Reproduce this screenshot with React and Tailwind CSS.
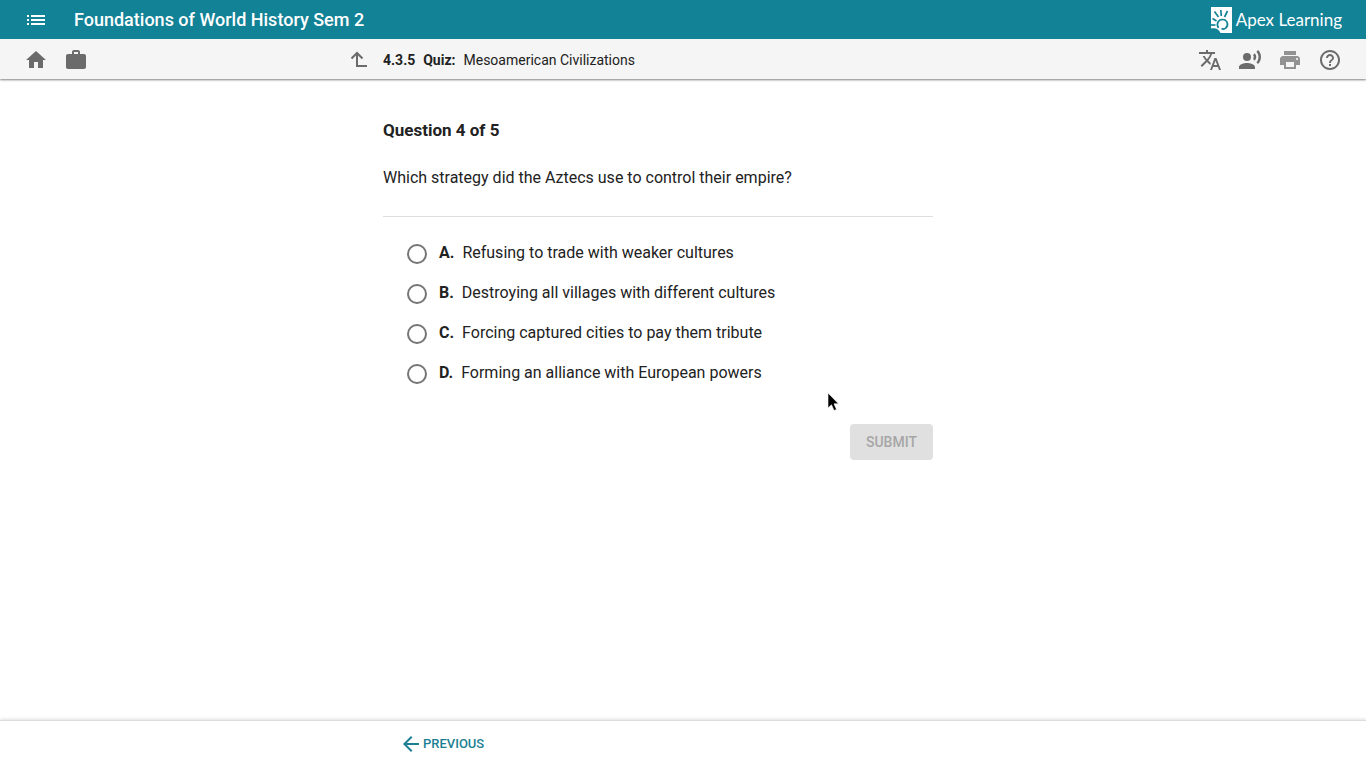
import React, { useState } from 'react';
import {
  MdArrowBack,
  MdHelpOutline,
  MdHome,
  MdList,
  MdPrint,
  MdRecordVoiceOver,
  MdTranslate,
  MdWork,
} from 'react-icons/md';

const choices = [
  { letter: "A", text: "Refusing to trade with weaker cultures" },
  { letter: "B", text: "Destroying all villages with different cultures" },
  { letter: "C", text: "Forcing captured cities to pay them tribute" },
  { letter: "D", text: "Forming an alliance with European powers" },
];

const IconButton = ({ label, className = "text-[#6b6b6b]", children }) => (
  <button type="button" aria-label={label} className={`flex size-6 items-center justify-center ${className}`}>
    {children}
  </button>
);

const Logo = () => (
  <a href="#home" className="flex items-center gap-1 text-white">
    <svg width="21" height="26" viewBox="0 0 21 26" aria-hidden="true">
      <rect width="21" height="26" fill="#fff" />
      <g stroke="#128297" strokeWidth="1.7" fill="none">
        <path d="M1.5 11.5 5.5 14" />
        <path d="M3.5 4.500 7.500 10" />
        <path d="M9.8 3 10.3 9" />
        <path d="M16.5 4 13.5 10" />
        <path d="M0 18H4.500" />
        <path d="M7.5 21C5 17.500 7 12.500 11.500 12.500C16.500 12.500 18 18.500 14.800 21C13.500 22.200 11.800 22.200 10.500 21.500" />
      </g>
      <path d="M0 21.500C4 20.500 8 21.500 9.500 26H0Z" fill="#128297" />
    </svg>
    <span className="font-[Lato,sans-serif] text-[17px] leading-6">Apex Learning</span>
  </a>
);

const UpLevelIcon = () => (
  <svg width="24" height="24" viewBox="0 0 24 24" fill="none" stroke="currentColor" strokeWidth="2" aria-hidden="true">
    <path d="M20 18H10V5M4.500 10.500 10 5L15.500 10.500" />
  </svg>
);

const Pointer = () => (
  <svg className="absolute top-[313px] left-[444px]" width="14" height="22" viewBox="0 0 14 22" aria-hidden="true">
    <path d="M1 1V16L4.500 12.800L7 18.500L9.500 17.400L7 11.800H11.500Z" fill="#000" stroke="#fff" strokeWidth="0.6" />
  </svg>
);

const App = () => {
  const [selected, setSelected] = useState(null);

  return (
    <div className="flex min-h-screen flex-col bg-white font-[Roboto,sans-serif] text-[#222]">
      <header className="relative shadow-[0_1px_2px_rgba(0,0,0,0.5)]">
        <div className="flex h-[39px] items-center justify-between bg-[#128297] px-6">
          <div className="flex items-center gap-[26px]">
            <IconButton label="Menu" className="text-white">
              <MdList size={24} />
            </IconButton>
            <h1 className="text-[18px] leading-6 font-medium text-white">Foundations of World History Sem 2</h1>
          </div>
          <Logo />
        </div>

        <div className="grid h-10 grid-cols-[1fr_600px_1fr] items-center bg-[#f5f5f5] px-6 pt-0.5">
          <div className="flex items-center gap-4 pr-3">
            <IconButton label="Home">
              <MdHome size={24} />
            </IconButton>
            <IconButton label="Portfolio">
              <MdWork size={24} />
            </IconButton>
            <div className="ml-auto">
              <IconButton label="Up one level">
                <UpLevelIcon />
              </IconButton>
            </div>
          </div>
          <div className="flex gap-2 text-[14px] leading-5">
            <b>4.3.5</b>
            <b>Quiz:</b>
            <span>Mesoamerican Civilizations</span>
          </div>
          <div className="flex items-center justify-end gap-4">
            <IconButton label="Translate">
              <MdTranslate size={24} />
            </IconButton>
            <IconButton label="Read aloud">
              <MdRecordVoiceOver size={24} />
            </IconButton>
            <IconButton label="Print" className="text-[#929292]">
              <MdPrint size={24} />
            </IconButton>
            <IconButton label="Help">
              <MdHelpOutline size={24} />
            </IconButton>
          </div>
        </div>
      </header>

      <main className="relative mx-auto w-full max-w-[600px] flex-1 pt-[39px] pr-[50px]">
        <h2 className="text-[17px] leading-6 font-bold">Question 4 of 5</h2>
        <p id="question" className="mt-6 text-[16px] leading-6">
          Which strategy did the Aztecs use to control their empire?
        </p>
        <form
          className="mt-[26px] border-t border-[#dedede] pt-4"
          onSubmit={(e) => e.preventDefault()}
        >
          <div role="radiogroup" aria-labelledby="question" className="pl-6">
            {choices.map((choice) => (
              <label key={choice.letter} className="flex h-10 items-center gap-3">
                <input
                  type="radio"
                  name="answer"
                  value={choice.letter}
                  checked={selected === choice.letter}
                  onChange={() => setSelected(choice.letter)}
                  className="mt-0.5 size-5 appearance-none rounded-full border-2 border-[#757575] bg-white checked:border-[6px] checked:border-[#128297]"
                />
                <span className="flex gap-2 text-[16px] leading-6">
                  <b>{choice.letter}.</b>
                  {choice.text}
                </span>
              </label>
            ))}
          </div>
          <div className="mt-[31px] flex justify-end">
            <button
              type="submit"
              disabled={!selected}
              className="h-9 rounded bg-[#128297] px-4 text-[14px] font-medium text-white disabled:bg-[#e0e0e0] disabled:text-[#a6a6a6]"
            >
              SUBMIT
            </button>
          </div>
        </form>
        <Pointer />
      </main>

      <footer className="border-t border-[#dcdcdc] shadow-[0_-1px_3px_rgba(0,0,0,0.12)]">
        <div className="mx-auto flex h-[47px] w-full max-w-[600px] items-center px-4 pb-0.5">
          <button type="button" className="flex items-center text-[13px] font-medium text-[#1d7f93]">
            <MdArrowBack size={24} />
            PREVIOUS
          </button>
        </div>
      </footer>
    </div>
  );
};

export default App;
